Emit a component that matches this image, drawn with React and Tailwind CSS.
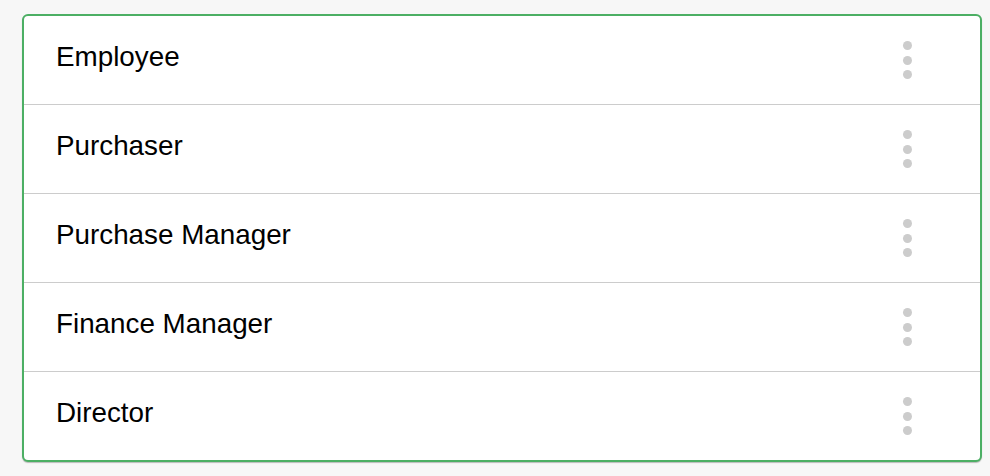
import React from "react";

const roles = ["Employee", "Purchaser", "Purchase Manager", "Finance Manager", "Director"];

function Dots() {
  return (
    <div className="flex flex-col items-center gap-[5.5px] w-[10px]">
      <span className="block w-[9px] h-[9px] rounded-full bg-[#cccccc]" />
      <span className="block w-[9px] h-[9px] rounded-full bg-[#cccccc]" />
      <span className="block w-[9px] h-[9px] rounded-full bg-[#cccccc]" />
    </div>
  );
}

export default function App() {
  return (
    <div className="min-h-screen bg-[#f7f7f7] pt-[14px] pl-[22px] pr-[8px]" style={{ fontFamily: '"Liberation Sans", Arial, sans-serif' }}>
      <div className="w-[960px] border-2 border-[#4caf64] rounded-[6px] bg-white shadow-[0_1px_1px_rgba(0,0,0,0.25)] overflow-hidden">
        {roles.map((r, i) => (
          <div
            key={r}
            className={`flex items-center justify-between h-[88px] pl-[32px] pr-[68px] ${i > 0 ? "border-t border-[#cccccc] h-[89px]" : ""}`}
          >
            <span className="text-[27.8px] text-black leading-none -mt-[6px]">{r}</span>
            <Dots />
          </div>
        ))}
      </div>
    </div>
  );
}
